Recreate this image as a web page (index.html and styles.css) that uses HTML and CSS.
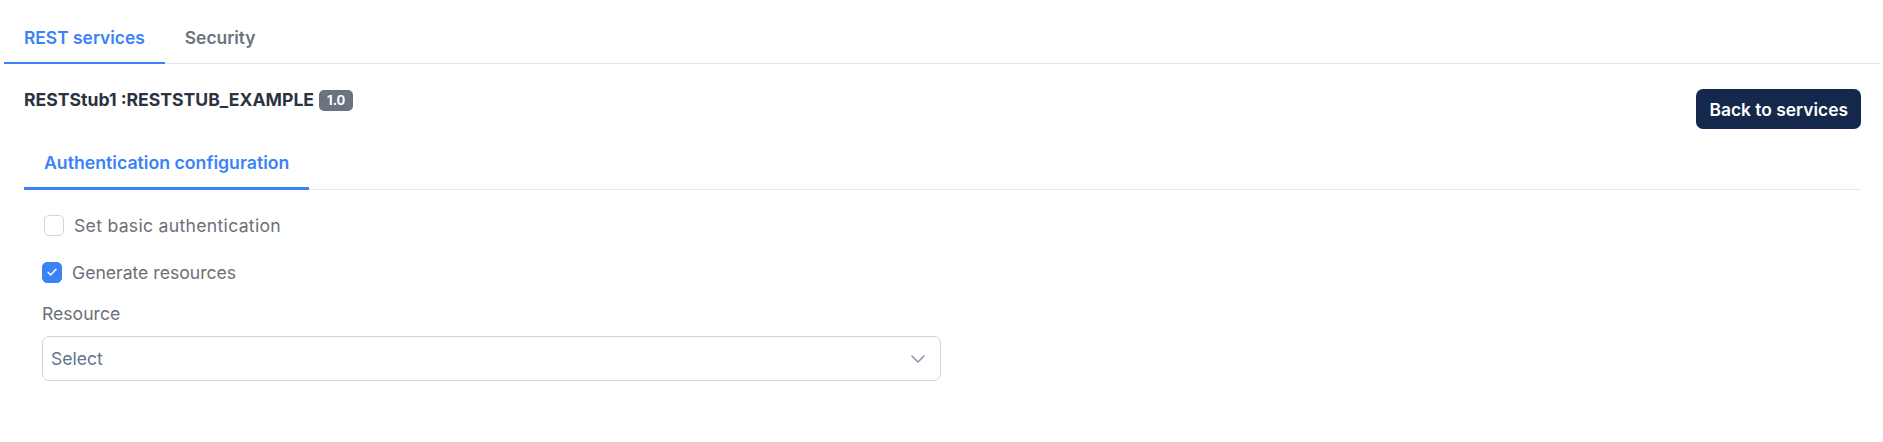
FILE: index.html
```
<!DOCTYPE html>
<html lang="en">
<head>
    <meta charset="UTF-8">
    <meta name="viewport" content="width=device-width, initial-scale=1.0">
    <title>REST services</title>
    <link rel="stylesheet" href="styles.css">
</head>
<body>
    <div id="container">
        <nav class="tabs top-tabs">
            <a class="tab active" href="#">REST services</a>
            <a class="tab" href="#">Security</a>
        </nav>

        <main class="content">
            <div class="title-row">
                <h2 class="stub-title">RESTStub1 :RESTSTUB_EXAMPLE <span class="badge">1.0</span></h2>
                <button class="back-btn">Back to services</button>
            </div>

            <nav class="tabs sub-tabs">
                <a class="tab active" href="#">Authentication configuration</a>
            </nav>

            <div class="panel">
                <label class="check-row first">
                    <span class="checkbox"></span>
                    Set basic authentication
                </label>
                <label class="check-row">
                    <span class="checkbox checked">
                        <svg width="14" height="14" viewBox="0 0 14 14"><path d="M3 7.3l2.6 2.6L11 4.3" fill="none" stroke="#fff" stroke-width="1.5" stroke-linecap="round" stroke-linejoin="round"/></svg>
                    </span>
                    Generate resources
                </label>

                <div class="field-label">Resource</div>
                <div class="select">
                    <span>Select</span>
                    <svg width="16" height="16" viewBox="0 0 16 16"><path d="M2 5l6 6 6-6" fill="none" stroke="#8b95a7" stroke-width="1.6" stroke-linecap="round" stroke-linejoin="round"/></svg>
                </div>
            </div>
        </main>
    </div>
</body>
</html>
```

FILE: styles.css
```
body {
    font-family: Inter, "Liberation Sans", sans-serif;
    background-color: #fff;
    color: #374151;
    margin: 0;
}

* {
    box-sizing: border-box;
}

#container {
    margin: 0 2px 0 4px;
}

/* tabs */
.tabs {
    display: flex;
    border-bottom: 1px solid #e2e6ee;
}

.tab {
    display: block;
    padding: 0 20px;
    font-size: 17.4px;
    font-weight: 600;
    line-height: 24px;
    color: #6b7280;
    text-decoration: none;
    border-bottom: 2px solid transparent;
    margin-bottom: -1px;
}

.tab.active {
    color: #3b82f6;
    border-bottom-color: #3b82f6;
}

.top-tabs {
    margin-top: 15px;
}

.top-tabs .tab {
    padding-top: 11px;
    padding-bottom: 12px;
}

.sub-tabs {
    margin-top: 10px;
    border-bottom-color: #e3e7f4;
}

.sub-tabs .tab {
    font-size: 17.7px;
    padding-top: 12px;
    padding-bottom: 12px;
    border-bottom-width: 3px;
}

.content {
    padding: 24px 20px 20px 20px;
}

.title-row {
    display: flex;
    justify-content: space-between;
    align-items: flex-start;
}

.stub-title {
    margin: 0;
    font-size: 17.6px;
    font-weight: 700;
    line-height: 24px;
    color: #2b3240;
    display: flex;
    align-items: center;
}

.badge {
    display: inline-block;
    margin-left: 5px;
    padding: 0 8px;
    height: 21px;
    line-height: 21px;
    font-size: 13px;
    font-weight: 700;
    color: #fff;
    background-color: #6b7280;
    border-radius: 5px;
}

.back-btn {
    margin-top: 1px;
    height: 40px;
    padding: 0 13px;
    font-family: Inter, "Liberation Sans", sans-serif;
    font-size: 17.4px;
    font-weight: 600;
    color: #fff;
    background-color: #13284a;
    border: none;
    border-radius: 7px;
    cursor: pointer;
}

/* auth form */
.panel {
    padding: 23px 0 0 18px;
    width: 917px;
}

.check-row {
    display: flex;
    align-items: center;
    gap: 10px;
    height: 24px;
    font-size: 17.6px;
    color: #6b6f78;
    margin-bottom: 22px;
}

.check-row.first {
    padding-left: 2px;
    letter-spacing: 0.3px;
    margin-bottom: 23px;
}

.checkbox {
    display: flex;
    align-items: center;
    justify-content: center;
    width: 20px;
    height: 21px;
    border: 1px solid #cfd6e2;
    border-radius: 5px;
    background-color: #fff;
}

.checkbox.checked {
    background-color: #3b82f6;
    border-color: #3b82f6;
}

.field-label {
    font-size: 17.6px;
    line-height: 24px;
    color: #6b6f78;
    margin-top: -4px;
}

.select {
    margin-top: 10px;
    height: 45px;
    display: flex;
    align-items: center;
    justify-content: space-between;
    padding: 0 14px 0 8px;
    border: 1px solid #cdd5e1;
    border-radius: 7px;
    font-size: 17.6px;
    color: #64748b;
}
```
